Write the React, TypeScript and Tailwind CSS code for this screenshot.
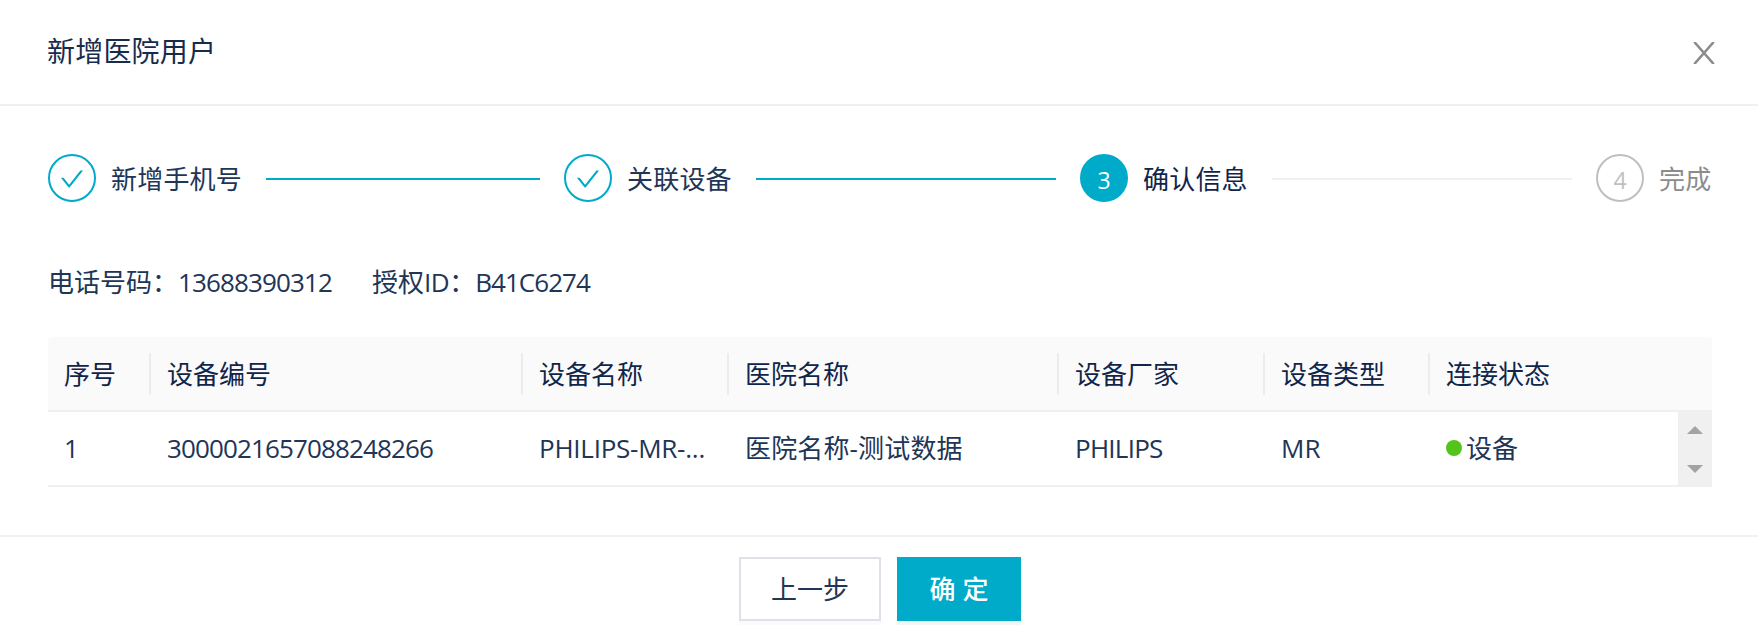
import React from 'react';

interface Step {
  title: string;
  status: 'finish' | 'process' | 'wait';
}

interface Device {
  id: string;
  name: string;
  hospital: string;
  vendor: string;
  type: string;
  status: string;
}

const steps: Step[] = [
  { title: '新增手机号', status: 'finish' },
  { title: '关联设备', status: 'finish' },
  { title: '确认信息', status: 'process' },
  { title: '完成', status: 'wait' },
];

const columns = ['序号', '设备编号', '设备名称', '医院名称', '设备厂家', '设备类型', '连接状态'];

const devices: Device[] = [
  {
    id: '3000021657088248266',
    name: 'PHILIPS-MR-...',
    hospital: '医院名称-测试数据',
    vendor: 'PHILIPS',
    type: 'MR',
    status: '设备',
  },
];

const iconStyles = {
  finish: 'border-[#00aac9] text-[#00aac9]',
  process: 'border-[#00aac9] bg-[#00aac9] text-white',
  wait: 'border-[#bfbfbf] text-[#bfbfbf]',
};

const titleStyles = {
  finish: '',
  process: 'text-[#10254a]',
  wait: 'text-[#8c8c8c]',
};

const CheckIcon = () => (
  <svg className="w-6 h-6 mt-0.5" viewBox="64 64 896 896" fill="currentColor">
    <path d="M912 190h-69.900c-9.800 0-19.100 4.500-25.100 12.200L404.700 724.500 207 474a32 32 0 00-25.100-12.200H112c-6.700 0-10.400 7.700-6.300 12.900l273.900 347c12.800 16.200 37.400 16.200 50.300 0l488.400-618.900c4.100-5.100.4-12.800-6.300-12.800z" />
  </svg>
);

const StepItem: React.FC<{ step: Step; index: number; last: boolean }> = ({ step, index, last }) => (
  <div className={`flex items-center ${last ? '' : 'w-[516px]'}`}>
    <div className={`w-12 h-12 mr-[15px] shrink-0 rounded-full border-2 flex items-center justify-center ${iconStyles[step.status]}`}>
      {step.status === 'finish' ? <CheckIcon /> : <span className="text-[23px] leading-none pt-1">{index + 1}</span>}
    </div>
    <span className={`whitespace-nowrap pt-0.5 tracking-[0.2px] ${titleStyles[step.status]}`}>{step.title}</span>
    {!last && (
      <div className={`flex-1 h-0.5 mx-6 mt-0.5 ${step.status === 'finish' ? 'bg-[#00aac9]' : 'bg-[#f0f0f0]'}`}></div>
    )}
  </div>
);

const gridCols = 'grid grid-cols-[103px_372px_206px_330px_206px_165px_1fr]';

export default function App() {
  return (
    <div className="w-full h-[637px] bg-white text-[#213557] text-[26px] leading-[42px] font-normal font-['Open_Sans','Noto_Sans_CJK_SC',sans-serif] flex flex-col overflow-hidden">
      {/* Header */}
      <div className="h-[106px] border-b-2 border-[#f0f0f0] pl-[47px] pr-[43px] flex items-center justify-between">
        <h1 className="text-[28px] text-[#172b4d] tracking-[0.2px] -mt-0.5">新增医院用户</h1>
        <button aria-label="关闭" className="text-[#8c8c8c] pt-0.5">
          <svg className="w-[22px] h-[22px]" viewBox="0 0 22 22" fill="none" stroke="currentColor" strokeWidth={2.6}>
            <path d="M1.300 0L20.700 22M20.700 0L1.300 22" />
          </svg>
        </button>
      </div>

      {/* Body */}
      <div className="h-[431px] border-b-2 border-[#f0f0f0] pl-12 pr-[46px] pt-12">
        <div className="flex h-12">
          {steps.map((step, i) => (
            <StepItem key={step.title} step={step} index={i} last={i === steps.length - 1} />
          ))}
        </div>

        <div className="flex mt-[59px] gap-10">
          <div className="whitespace-nowrap">
            电话号码：<span className="tracking-[-0.87px]">13688390312</span>
          </div>
          <div className="whitespace-nowrap">
            授权<span className="tracking-[-0.5px]">ID</span>：<span className="tracking-[-0.95px]">B41C6274</span>
          </div>
        </div>

        {/* Device table */}
        <div className="mt-[34px]">
          <div className={`${gridCols} h-[75px] bg-[#fafafa] border-b-2 border-[#f0f0f0] rounded-t items-center text-[#10254a]`}>
            {columns.map((name, i) => (
              <div
                key={name}
                className={`h-[42px] px-4 flex items-center ${i < columns.length - 1 ? 'border-r-2 border-[#ececec]' : ''}`}
              >
                {name}
              </div>
            ))}
          </div>
          <div className="flex h-[75px]">
            <div className="flex-1 min-w-0">
              {devices.map((device, i) => (
                <div key={device.id} className={`${gridCols} h-[75px] border-b-2 border-[#f0f0f0] items-center pb-0.5`}>
                  <div className="px-4">{i + 1}</div>
                  <div className="px-4 tracking-[-0.87px]">{device.id}</div>
                  <div className="pl-4 whitespace-nowrap tracking-[-0.25px]">{device.name}</div>
                  <div className="px-4 tracking-[0.15px]">{device.hospital}</div>
                  <div className="px-4 tracking-[-0.75px]">{device.vendor}</div>
                  <div className="px-4">{device.type}</div>
                  <div className="px-4 flex items-center gap-1">
                    <span className="w-4 h-4 rounded-full bg-[#52c41a]"></span>
                    {device.status}
                  </div>
                </div>
              ))}
            </div>
            {/* Scrollbar */}
            <div className="w-[34px] h-[77px] -mt-0.5 bg-[#f0f0f0] pt-4 pb-3.5 flex flex-col items-center justify-between text-[#a3a3a3]">
              <svg className="w-4 h-2" viewBox="0 0 16 8" fill="currentColor">
                <path d="M8 0l8 8H0z" />
              </svg>
              <svg className="w-4 h-2" viewBox="0 0 16 8" fill="currentColor">
                <path d="M0 0h16L8 8z" />
              </svg>
            </div>
          </div>
        </div>
      </div>

      {/* Footer */}
      <div className="flex justify-center gap-4 pt-5 pl-0.5">
        <button className="w-[142px] h-16 border-2 border-[#dfe1e8] shadow-[0_4px_0_rgba(0,0,0,0.016)]">上一步</button>
        <button className="w-[124px] h-16 bg-[#00aac9] text-white font-medium shadow-[0_4px_0_rgba(0,0,0,0.045)] flex items-center justify-center gap-[7px]">
          <span>确</span>
          <span>定</span>
        </button>
      </div>
    </div>
  );
}
